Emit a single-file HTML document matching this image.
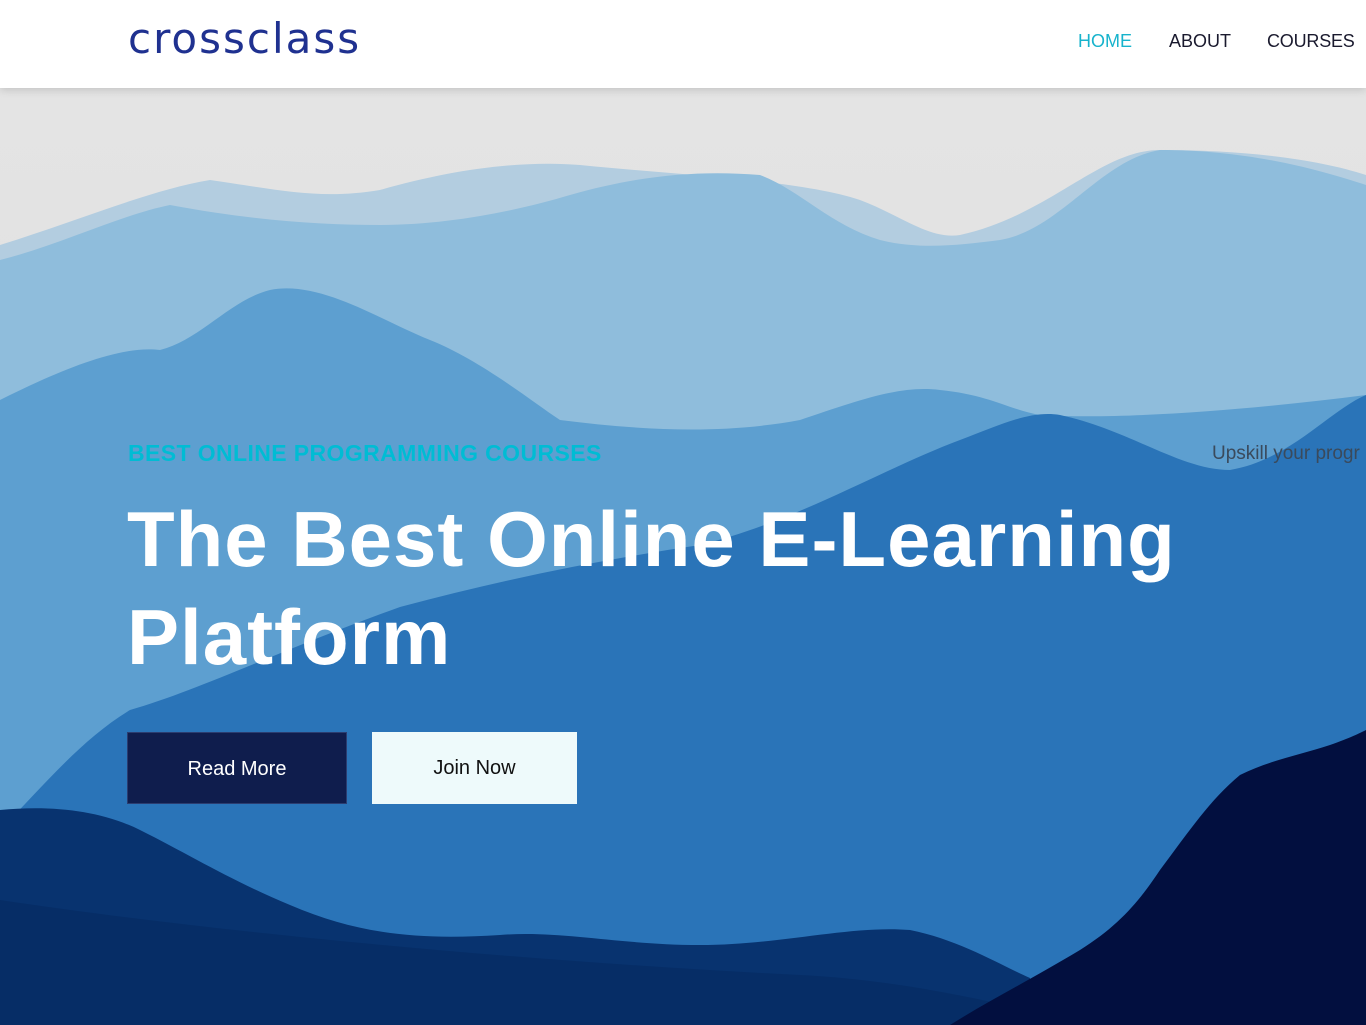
<!DOCTYPE html>
<html><head><meta charset="utf-8"><style>
*{margin:0;padding:0;box-sizing:border-box}
body{width:1366px;height:1025px;overflow:hidden;font-family:"Liberation Sans",sans-serif;background:#fff}
header{position:absolute;top:0;left:0;width:1366px;height:88px;background:#fff;z-index:5;box-shadow:0 2px 8px rgba(0,0,0,.15)}
.logo{position:absolute;left:128px;top:14px;font-size:42px;color:#1f3190;letter-spacing:2px;font-family:"DejaVu Sans","Liberation Sans",sans-serif}
nav{position:absolute;top:31px;left:1078px;font-size:18px;color:#1a1a2e}
nav span{position:absolute;white-space:nowrap}
.hero{position:absolute;top:88px;left:0;width:1366px;height:937px}
.tag{position:absolute;left:128px;top:440px;font-size:23px;color:#00bcd4;font-weight:bold;letter-spacing:.4px;white-space:nowrap}
.side{position:absolute;left:1212px;top:443px;font-size:19px;color:#3a4a5c;white-space:nowrap}
h1{position:absolute;left:127px;top:490px;font-size:78px;line-height:98px;color:#fff;font-weight:bold;letter-spacing:1px}
.b1{position:absolute;left:127px;top:732px;width:220px;height:72px;background:#0f1d4d;color:#fff;font-size:20px;text-align:center;line-height:72px;border:1px solid #2b3d70}
.b2{position:absolute;left:372px;top:732px;width:205px;height:72px;background:#eefafb;color:#111;font-size:20px;text-align:center;line-height:72px}
</style></head><body>
<header><div class="logo">crossclass</div>
<nav><span style="left:0;color:#17b3cc">HOME</span><span style="left:91px">ABOUT</span><span style="left:189px;letter-spacing:-.2px">COURSES</span></nav></header>
<svg class="hero" width="1366" height="937" viewBox="0 88 1366 937">
<defs><linearGradient id="sky" x1="0" y1="0" x2="0" y2="1"><stop offset="0" stop-color="#e4e4e4"/><stop offset="1" stop-color="#dcdcdc"/></linearGradient></defs>
<rect x="0" y="88" width="1366" height="937" fill="url(#sky)"/>
<path d="M0 245 C80 220 150 190 210 180 C280 190 320 200 380 190 C450 170 520 160 580 165 C680 175 800 180 860 200 C900 215 930 240 960 235 C1050 215 1100 150 1160 150 C1250 150 1320 160 1366 175 L1366 1025 L0 1025Z" fill="#b3cde0"/>
<path d="M0 260 C60 245 120 215 170 205 C250 220 320 225 380 225 C450 225 520 210 570 195 C640 175 700 170 760 175 C800 190 830 225 880 240 C920 250 960 245 1000 240 C1060 230 1100 160 1160 150 C1250 150 1320 170 1366 185 L1366 1025 L0 1025Z" fill="#8fbddc"/>
<path d="M0 400 C60 370 120 345 160 350 C200 340 230 300 270 290 C320 280 380 320 430 340 C480 360 530 400 560 420 C640 430 720 435 800 420 C860 400 900 385 940 390 C990 395 1010 410 1040 415 C1120 420 1250 410 1366 395 L1366 1025 L0 1025Z" fill="#5d9fd0"/>
<path d="M0 830 C40 790 80 740 130 710 C200 690 280 650 400 607 C500 580 600 560 700 545 C800 520 880 470 960 440 C1000 425 1030 410 1060 415 C1130 430 1180 470 1230 470 C1290 460 1330 410 1366 395 L1366 1025 L0 1025Z" fill="#2a74b8"/>
<path d="M0 810 C50 805 100 810 140 830 C190 855 230 880 290 905 C360 935 420 940 500 935 C560 930 620 945 700 945 C780 945 850 925 910 930 C960 940 1000 965 1030 978 L1030 1025 L0 1025Z" fill="#08336f"/>
<path d="M0 900 C200 930 500 960 800 975 C900 980 980 1000 1030 1010 L1030 1025 L0 1025Z" fill="#052a60" opacity=".6"/>
<path d="M950 1025 C990 1000 1030 980 1080 950 C1120 925 1140 900 1160 870 C1190 830 1210 800 1240 775 C1270 760 1300 755 1330 745 C1350 738 1360 733 1366 730 L1366 1025Z" fill="#020f3f"/>
</svg>
<div class="tag">BEST ONLINE PROGRAMMING COURSES</div>
<div class="side">Upskill your progr</div>
<h1>The Best Online E-Learning<br>Platform</h1>
<div class="b1">Read More</div>
<div class="b2">Join Now</div>
</body></html>
